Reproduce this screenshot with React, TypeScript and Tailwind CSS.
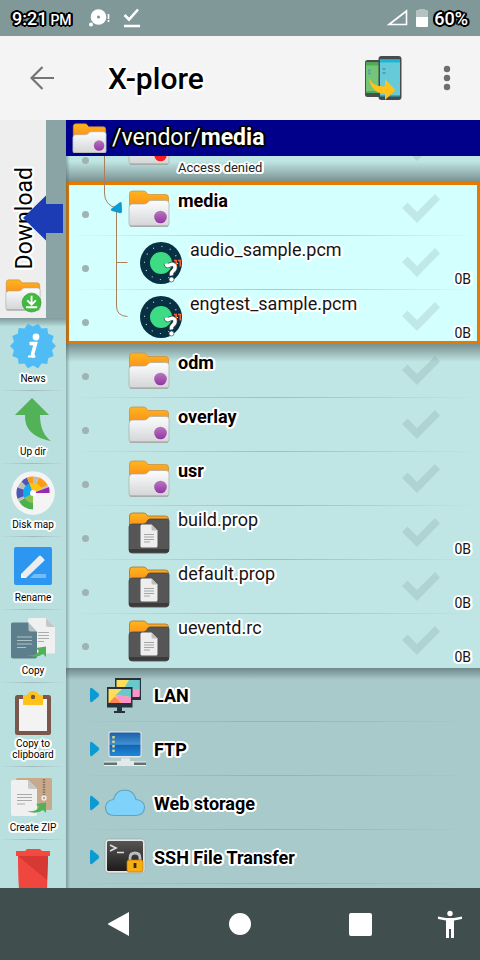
import type { ReactNode } from "react";

const halo =
  "[text-shadow:2px_0_#fff,-2px_0_#fff,0_2px_#fff,0_-2px_#fff,1px_1px_#fff,-1px_-1px_#fff,1px_-1px_#fff,-1px_1px_#fff,2px_1px_#fff,-2px_1px_#fff,2px_-1px_#fff,-2px_-1px_#fff,1px_2px_#fff,-1px_2px_#fff]";
const darkHalo =
  "[text-shadow:2px_0_#000,-2px_0_#000,0_2px_#000,0_-2px_#000,1px_1px_#000,-1px_-1px_#000,1px_-1px_#000,-1px_1px_#000,2px_1px_#000,-2px_1px_#000,2px_-1px_#000,-2px_-1px_#000]";

function Gradients() {
  return (
    <svg className="absolute size-0" aria-hidden="true">
      <defs>
        <linearGradient id="orange" x1="0" y1="0" x2="0" y2="1">
          <stop offset="0" stopColor="#ffb51f" />
          <stop offset="1" stopColor="#fb9018" />
        </linearGradient>
        <linearGradient id="paper" x1="0" y1="0" x2="0" y2="1">
          <stop offset="0" stopColor="#fdfdfd" />
          <stop offset="1" stopColor="#d2d4d6" />
        </linearGradient>
        <linearGradient id="purple" x1="0" y1="0" x2="0" y2="1">
          <stop offset="0" stopColor="#b878bd" />
          <stop offset="1" stopColor="#9335a5" />
        </linearGradient>
        <linearGradient id="screen" x1="0" y1="0" x2="0" y2="1">
          <stop offset="0" stopColor="#1c5fa9" />
          <stop offset="0.5" stopColor="#3f90d2" />
          <stop offset="0.55" stopColor="#1464b0" />
          <stop offset="1" stopColor="#1d8adb" />
        </linearGradient>
        <linearGradient id="terminal" x1="0" y1="0" x2="0" y2="1">
          <stop offset="0" stopColor="#575553" />
          <stop offset="1" stopColor="#1e1c1b" />
        </linearGradient>
      </defs>
    </svg>
  );
}

type Badge = "purple" | "red" | "download";

function Folder({ badge, className }: { badge: Badge; className: string }) {
  return (
    <svg viewBox="0 0 42 37" className={className} aria-hidden="true">
      <path d="M1.500 16V4q0-3 3-3h11q2 0 3 1.500l1.500 2h17.500q3 0 3 3v8z" fill="url(#orange)" stroke="#c98a3a" strokeWidth=".7" />
      <path
        d="M1 17.500q0-3 3-3.500h12q3 0 4-2 1-1.500 3-1.500h15q3 0 3 3v20q0 3-3 3H4q-3 0-3-3z"
        fill="url(#paper)"
        stroke="#a3acab"
        strokeWidth=".7"
      />
      <path d="M2 36h38" stroke="#a09c99" strokeWidth="1" />
      {badge === "purple" && <circle cx="32.500" cy="27" r="6.300" fill="url(#purple)" />}
      {badge === "red" && <circle cx="32.500" cy="27" r="6.300" fill="#fb1f24" />}
      {badge === "download" && (
        <g>
          <circle cx="31" cy="27.500" r="11" fill="#3fbb3f" stroke="#2c9a2e" strokeWidth=".8" />
          <path d="M31 19.500v10M26 25l5 5 5-5M24.500 33h13" fill="none" stroke="#fff" strokeWidth="2.200" />
        </g>
      )}
    </svg>
  );
}

function DarkFolder() {
  return (
    <svg viewBox="0 0 42 42" className="w-[42px] shrink-0" aria-hidden="true">
      <path d="M1.500 14V4q0-3 3-3h11q2 0 3 1.500l1 1.500h18q3 0 3 3v8z" fill="url(#orange)" stroke="#a4712c" strokeWidth=".8" />
      <path d="M1 15q0-3 3-3h11q3 0 4-2.500 1-2.500 3-2.500h17q2 0 2 2v28q0 4-3 4H4q-3 0-3-3z" fill="#565657" stroke="#47474a" strokeWidth=".8" />
      <path d="M1 37h40v1q0 2.500-3 2.500H4q-3 0-3-2.500z" fill="#3b3b3d" />
      <path d="M14 12.500h9.500l6 6V34q0 1.500-1.500 1.500H14q-1.500 0-1.500-1.500V14q0-1.500 1.500-1.500z" fill="#eee" />
      <path d="M23.500 12.500l6 6h-4.500q-1.500 0-1.500-1.500z" fill="#bdbdbd" />
      <path d="M16 22.500h10M16 25h10M16 27.500h10M16 30h6" stroke="#a5a5a5" />
    </svg>
  );
}

const questionHook = "M27 22.500q.5 3.500 3.500 1.500 4.500-2 5.500 1.500 .5 2.500-2 4.500-2 1.500-1.500 4.500";

function PcmFile() {
  return (
    <svg viewBox="0 0 44 44" className="w-[44px] shrink-0" aria-hidden="true">
      <circle cx="22" cy="22" r="21" fill="#073042" />
      <circle cx="22" cy="22" r="16.500" fill="none" stroke="#cfe0e4" strokeWidth="1.100" strokeDasharray="1 7.640" />
      <circle cx="22" cy="22" r="11" fill="#3ddc84" />
      <path d={questionHook} fill="none" stroke="#3f5057" strokeWidth="5" />
      <path d="M35 19.500h2.200v6M39 19.500h2.200v6" fill="none" stroke="#f86734" strokeWidth="1.500" />
      <path d={questionHook} fill="none" stroke="#fff" strokeWidth="3.400" />
      <circle cx="32.500" cy="38.500" r="2.500" fill="#fff" stroke="#3f5057" strokeWidth=".7" />
    </svg>
  );
}

function SelectBox({ name }: { name: string }) {
  return (
    <label className="mr-[39px] grid h-[30px] w-10 shrink-0 place-items-center">
      <input type="checkbox" aria-label={`Select ${name}`} className="col-start-1 row-start-1 size-full appearance-none" />
      <svg viewBox="0 0 40 30" className="pointer-events-none col-start-1 row-start-1 w-10" aria-hidden="true">
        <path d="M1 15l5.500-5.500 9.500 9.500L34 1l5 5.500L16 30z" fill="#64787a" opacity=".17" />
      </svg>
    </label>
  );
}

function Divider() {
  return (
    <span className="absolute inset-x-0 bottom-0 h-px bg-linear-to-r from-transparent via-[#8f97a0]/55 via-50% to-transparent" />
  );
}

interface RowProps {
  name: string;
  kind: "folder" | "denied" | "pcm" | "file";
  last?: boolean;
}

function Row({ name, kind, last }: RowProps) {
  const denied = kind === "denied";
  const indent = kind === "pcm" ? "w-[45px]" : "w-[34px]";
  return (
    <li className={`relative flex shrink-0 items-start ${denied ? "h-[62px]" : "h-[54px]"}`}>
      <span className="mb-[18px] ml-4 size-[7px] shrink-0 self-end rounded-full bg-[#9fb3b3]" />
      <span className={`${indent} ml-[5px] shrink-0`} />
      {(kind === "folder" || denied) && (
        <span className="mt-2 shrink-0">
          <Folder badge={denied ? "red" : "purple"} className="w-[42px]" />
        </span>
      )}
      {kind === "pcm" && <span className="mt-[5px] shrink-0"><PcmFile /></span>}
      {kind === "file" && <span className="mt-[6px] shrink-0"><DarkFolder /></span>}
      {denied ? (
        <span className={`mt-10 ml-2 flex-1 text-[13px] leading-4 text-[#222] ${halo}`}>{name}</span>
      ) : kind === "folder" ? (
        <span className={`mt-2 ml-2 flex-1 text-[18px] leading-[22px] font-bold text-black ${halo}`}>{name}</span>
      ) : (
        <span className={`mt-[3px] flex-1 text-[18px] leading-[22px] text-[#151515] ${halo} ${kind === "pcm" ? "ml-[7px]" : "ml-2"}`}>
          {name}
        </span>
      )}
      <span className="mt-[11px]"><SelectBox name={name} /></span>
      {(kind === "pcm" || kind === "file") && (
        <span className={`absolute right-[9px] bottom-[3px] text-[14px] leading-4 text-[#151515] ${halo}`}>0B</span>
      )}
      {!last && <Divider />}
    </li>
  );
}

const lanIcon = (
  <svg viewBox="0 0 44 44" className="w-11" aria-hidden="true">
    <path d="M12 5h26v22H12z" fill="#26323f" />
    <path d="M13.500 7h23v16h-23z" fill="#ffdf57" />
    <path d="M26 7h10.500v10H20z" fill="#68c9cc" />
    <path d="M25 16.500h11.500V24H25z" fill="#ff92c6" />
    <path d="M4 14h25.500v20.500H4zM14 34.500h5V38h3v2H11v-2h3z" fill="#26323f" />
    <path d="M5.500 16h22.500v14H5.500z" fill="#ffdf57" />
    <path d="M19 16h9v8L13 22z" fill="#68c9cc" />
    <path d="M12 22l16 2v6H18z" fill="#ff92c6" />
    <path d="M5.500 30L12 23.500l6 6.500z" fill="#ff8552" />
  </svg>
);

const ftpIcon = (
  <svg viewBox="0 0 44 44" className="w-11" aria-hidden="true">
    <path d="M1 34.500h42v4.500H1z" fill="#eee" />
    <path d="M1 35.500h42V38H1z" fill="#66706f" />
    <path d="M18 31h9v3h4v5H14v-5h4z" fill="#e5e8e8" />
    <rect x="5" y="4" width="34" height="27" rx="3" fill="#dfe5e8" stroke="#b6c0c2" strokeWidth=".7" />
    <rect x="6.500" y="5.500" width="31" height="23.500" rx="1.500" fill="url(#screen)" />
    <path d="M10.500 9v17" stroke="#d9d38c" strokeWidth="2.500" strokeDasharray="2.500 2" />
  </svg>
);

const cloudIcon = (
  <svg viewBox="0 0 44 44" className="w-11" aria-hidden="true">
    <path
      d="M11 34.500Q2.500 34 2.500 26.500q.5-7 8-8Q13 9 22 9q9 .5 11 9.500 8.500 1 8.500 8-.5 7.500-8.500 8z"
      fill="#7fd3fb"
      stroke="#63a2bd"
      strokeWidth="1.200"
    />
  </svg>
);

const sshIcon = (
  <svg viewBox="0 0 44 44" className="w-11" aria-hidden="true">
    <rect x="2" y="4" width="40" height="34" rx="3.500" fill="#e6e8e8" stroke="#9aa" strokeWidth=".7" />
    <rect x="4" y="6" width="36" height="30" rx="1.500" fill="url(#terminal)" />
    <path d="M7 10l6 3-6 3M14 17.500h7" fill="none" stroke="#ddd" strokeWidth="1.700" />
    <path d="M27 26v-3q0-5 5-5t5 5v3" fill="none" stroke="#bdbdbd" strokeWidth="2.800" />
    <rect x="24" y="25" width="16" height="12" rx="2" fill="#f8ae11" stroke="#b97908" strokeWidth=".7" />
    <path d="M32 28v5" stroke="#3a2a0a" strokeWidth="2.800" />
  </svg>
);

const services: { name: string; icon: ReactNode }[] = [
  { name: "LAN", icon: lanIcon },
  { name: "FTP", icon: ftpIcon },
  { name: "Web storage", icon: cloudIcon },
  { name: "SSH File Transfer", icon: sshIcon },
];

const toolIcon = "size-11";

// Outline of the fourteen-pointed seal behind the "i".
const sealPoints = Array.from({ length: 28 }, (_, i) => {
  const radius = i % 2 === 0 ? 23 : 19.5;
  const angle = (i * Math.PI) / 14;
  return `${(23 + radius * Math.cos(angle)).toFixed(1)},${(22 + radius * Math.sin(angle)).toFixed(1)}`;
}).join(" ");

const tools: { name: string; icon: ReactNode; iconOnly?: boolean }[] = [
  {
    name: "News",
    icon: (
      <svg viewBox="0 0 46 44" className="h-11 w-[46px]" aria-hidden="true">
        <polygon points={sealPoints} fill="#50bcf5" />
        <circle cx="26" cy="13" r="3.400" fill="#fff" />
        <path d="M19.500 19.500h6l-3 11q-.5 2.500 2.500 1" fill="none" stroke="#fff" strokeWidth="3.600" />
        <path d="M18 32.500h7" stroke="#fff" strokeWidth="2" />
      </svg>
    ),
  },
  {
    name: "Up dir",
    icon: (
      <svg viewBox="0 0 44 44" className={toolIcon} aria-hidden="true">
        <path d="M21 1L4 18h10q-1 21 26 26Q29 36 29 18h9z" fill="#53b158" />
      </svg>
    ),
  },
  {
    name: "Disk map",
    icon: (
      <svg viewBox="0 0 44 44" className={`${toolIcon} overflow-visible`} aria-hidden="true">
        <circle cx="22" cy="23" r="21.800" fill="#f4f4f4" />
        <path d="M22 23V39.500A16.500 16.500 0 0 1 8 31.500z" fill="#4caf50" />
        <path d="M22 23L8 31.500A16 16 0 0 1 6 28z" fill="#bdbdbd" />
        <path d="M22 23L6.500 28.500A16.500 16.500 0 0 1 6.500 17z" fill="#4a57b5" />
        <path d="M22 23L6.500 17.500A16.500 16.500 0 0 1 11 11z" fill="#bdbdbd" />
        <path d="M22 23L10.500 11.500A16.500 16.500 0 0 1 16 7.500z" fill="#4a57b5" />
        <path d="M22 23L16 7.500A16.500 16.500 0 0 1 22 6.500z" fill="#ff9d12" />
        <path d="M22 23V6.500A16.500 16.500 0 0 1 28 7.500z" fill="#bdbdbd" />
        <path d="M22 23L28 7.500A16.500 16.500 0 0 1 36.500 15z" fill="#ff9d12" />
        <path d="M22 23L36.500 15l1 2z" fill="#bdbdbd" />
        <path d="M22 23L38 17a16.500 16.500 0 0 1 .5 6z" fill="#9a27b0" />
        <path d="M22 23v10a10 10 0 0 1-8.500-5z" fill="#8bc34a" />
        <path d="M22 23l-8.500 5A10 10 0 0 1 18.500 13.500z" fill="#16a8ee" />
        <path d="M22 23l-3.500-9.500A10 10 0 0 1 31 18.500z" fill="#ffc413" />
        <circle cx="22" cy="23" r="3" fill="#fff" />
      </svg>
    ),
  },
  {
    name: "Rename",
    icon: (
      <svg viewBox="0 0 44 44" className={toolIcon} aria-hidden="true">
        <rect x="3" y="4" width="38" height="38" rx="2" fill="#2c96f0" />
        <path d="M23 31h12v4H19z" fill="#74bdf6" />
        <path d="M10 35v-4l18-18q1-1 2 0l3 3q1 1 0 2L15 35z" fill="#ededed" />
        <path d="M10 31l5 4h-5z" fill="#fff" />
      </svg>
    ),
  },
  {
    name: "Copy",
    icon: (
      <svg viewBox="0 0 44 44" className={toolIcon} aria-hidden="true">
        <path d="M18.500 2H35l9 9v25q0 1.500-1.500 1.500h-24q-1.500 0-1.500-1.500V3.500Q17 2 18.500 2z" fill="#f0f0f0" />
        <path d="M35 2l9 9h-7q-2 0-2-2z" fill="#c5c8c8" />
        <path d="M27 16.500h11M27 19.500h11M27 22.500h11M27 25.500h6" stroke="#a9adad" />
        <path d="M1.500 6.500h16q0 8 8.500 9v25q0 2-2 2H2q-2 0-2-2v-32q0-2 1.500-2z" fill="#5d7e8c" />
        <path d="M17.500 6.500l8.500 9h-6.500q-2 0-2-2z" fill="#b4c2c8" />
        <path d="M6 21h15M6 24.500h15M6 28h15M6 31.500h9" stroke="#b3c1c7" strokeWidth="1.200" />
        <path d="M16 39q10 1 12-4l-3-3 10-1.500V41l-3-3q-7 5-16 1z" fill="#53b158" />
      </svg>
    ),
  },
  {
    name: "Copy to clipboard",
    icon: (
      <svg viewBox="0 0 44 44" className={`${toolIcon} overflow-visible`} aria-hidden="true">
        <rect x="4" y="6" width="36" height="40" rx="2.500" fill="#7b564a" />
        <path d="M8 10h28v32H8z" fill="#f3f3f3" />
        <path d="M12 6h4q2-4 6-4t6 4h4v10H12z" fill="#ffc21a" />
        <circle cx="22" cy="8" r="2.200" fill="#755246" />
      </svg>
    ),
  },
  {
    name: "Create ZIP",
    icon: (
      <svg viewBox="0 0 44 44" className={toolIcon} aria-hidden="true">
        <rect x="5" y="5" width="36" height="32" rx="1.500" fill="#c9a98b" />
        <path d="M33 6v17" stroke="#857866" strokeWidth="2.400" strokeDasharray="1.500 1" />
        <circle cx="33" cy="25" r="2" fill="none" stroke="#eee" strokeWidth="1.400" />
        <path d="M1.500 7H17l9 9v25q0 2-2 2H1.500Q0 43 0 41V8.500Q0 7 1.500 7z" fill="#f0f0f0" />
        <path d="M17 7l9 9h-7q-2 0-2-2z" fill="#c5c8c8" />
        <path d="M6 21.500h15M6 24.500h15M6 27.500h15M6 31h8" stroke="#aaa" strokeWidth="1.200" />
        <path d="M16 38q10 1 12-4l-3-3 10-1.500V40l-3-3q-7 5-16 1z" fill="#53b158" />
      </svg>
    ),
  },
  {
    name: "Delete",
    iconOnly: true,
    icon: (
      <svg viewBox="0 0 44 44" className={toolIcon} aria-hidden="true">
        <path d="M5 5h9l2-2h13l2 2h8v5H5z" fill="#f4493f" />
        <path d="M7 10h30l-1 34H8z" fill="#e93e38" />
        <path d="M7 10h2l27 23-1 11H8z" fill="#ef4640" />
        <path d="M7 10h30v4L36 34z" fill="#d63833" />
      </svg>
    ),
  },
];

function Toolbar() {
  return (
    <aside className="flex w-[66px] shrink-0 flex-col overflow-hidden bg-[#b9e0df]">
      <button className="relative flex h-[198px] shrink-0 bg-[#8aa4a5] text-left">
        <span className="flex h-full w-[46px] flex-col items-center justify-end gap-[10px] bg-[#eee] pb-[7px]">
          <span className={`ml-1 rotate-180 text-[23px] leading-[26px] text-black [writing-mode:vertical-rl] ${halo}`}>
            Download
          </span>
          <Folder badge="download" className="w-[36px] overflow-visible" />
        </span>
        <svg viewBox="0 0 40 46" className="absolute top-[75px] left-[23px] w-10" aria-hidden="true">
          <path d="M0 23L23 .5V9h17v29H23v7.500z" fill="#1c3cb5" />
        </svg>
      </button>
      {tools.map((tool, index) => (
        <button
          key={tool.name}
          aria-label={tool.iconOnly ? tool.name : undefined}
          className={`relative flex shrink-0 flex-col items-center px-2 pt-[6px] pb-[7px] ${
            index === 0 ? "bg-linear-to-b from-[#7f9a9a] to-transparent to-12%" : ""
          }`}
        >
          {tool.icon}
          {!tool.iconOnly && <span className={`mt-[5px] text-[10px] leading-[11px] text-black ${halo}`}>{tool.name}</span>}
          <Divider />
        </button>
      ))}
    </aside>
  );
}

function TreeLines() {
  return (
    <svg viewBox="0 0 40 170" className="absolute top-9 left-[30px] w-10" aria-hidden="true">
      <path d="M8.500 0v37q0 12 12 15M20.500 52v98q0 10 11 10.500M20.500 106.500h11" fill="none" stroke="#a98058" />
      <path d="M15.500 52.500l8-6q2-1.500 2.200 1l.3 8q0 2-2 1.800l-8-2.300q-2-1-.5-2.500z" fill="#0a9bd3" />
    </svg>
  );
}

export default function App() {
  return (
    <div className="flex h-screen flex-col overflow-hidden bg-[#f4f4f4] font-[Roboto,sans-serif]">
      <Gradients />
      <div className="flex h-9 shrink-0 items-center bg-[#809998] px-3 text-[18px] font-medium text-white">
        <span className={`flex items-baseline gap-[3px] ${darkHalo}`}>
          <span>9:21</span>
          <span className="text-[14px]">PM</span>
        </span>
        <svg viewBox="0 0 22 20" className="ml-4 w-[22px]" aria-hidden="true">
          <circle cx="10.500" cy="9" r="7.800" fill="#fff" />
          <circle cx="10.500" cy="9" r="1.600" fill="#809998" />
          <circle cx="3" cy="16.500" r="2" fill="#fff" />
          <path d="M20.500 6v5M20.500 12v2" stroke="#fff" strokeWidth="1.600" />
        </svg>
        <svg viewBox="0 0 18 20" className="ml-[13px] w-[18px]" aria-hidden="true">
          <path d="M1.500 7l4.500 4.500L15 1.500M1 18h16" fill="none" stroke="#fff" strokeWidth="2.600" />
        </svg>
        <svg viewBox="0 0 22 18" className="ml-auto w-[22px]" aria-hidden="true">
          <path d="M3 15.500L20.500 2v13.500z" fill="none" stroke="#fff" strokeWidth="1.600" />
        </svg>
        <svg viewBox="0 0 12 20" className="ml-2 w-3" aria-hidden="true">
          <path d="M0 3q0-1 1-1h2V1h6v1h2q1 0 1 1v6H0z" fill="#b4c3c2" />
          <path d="M0 9h12v9q0 1-1 1H1q-1 0-1-1z" fill="#fff" />
        </svg>
        <span className={`ml-[6px] ${darkHalo}`}>60%</span>
      </div>

      <header className="flex h-[84px] shrink-0 items-center pr-[22px] pl-[30px]">
        <button aria-label="Back">
          <svg viewBox="0 0 24 24" className="w-6" aria-hidden="true">
            <path d="M24 12H2M12.500 1L1.500 12l11 11" fill="none" stroke="#747474" strokeWidth="2.200" />
          </svg>
        </button>
        <h1 className={`ml-[54px] text-[30px] font-medium text-black ${halo}`}>X-plore</h1>
        <button aria-label="Switch pane" className="ml-auto">
          <svg viewBox="0 0 38 46" className="w-[38px]" aria-hidden="true">
            <rect x="1" y="5" width="20" height="37" rx="2.500" fill="#4a4f4e" />
            <path d="M2 7.500h17v30H2z" fill="#74c577" />
            <path d="M2 7.500h17v3H2zM2 36h17v2H2z" fill="#4bb050" />
            <rect x="14.500" y="1" width="23" height="44" rx="3" fill="#474b4e" />
            <path d="M16 4.500h20v36.500H16z" fill="#66cad8" />
            <path d="M16 4.500h20v3H16zM16 40h20v1.500H16z" fill="#1fb5d0" />
            <path d="M4 15.500h2.500M4 18.500h2.500M18.500 14h3M18.500 18h3" stroke="#55a0a5" strokeWidth="2" />
            <path d="M5 23q5 10 16 8v-7l10.500 11L21 45v-6Q7 38 5 23z" fill="#ffc21a" />
          </svg>
        </button>
        <button aria-label="More options" className="ml-[34px]">
          <svg viewBox="0 0 22 26" className="w-[22px]" aria-hidden="true">
            <g fill="#6e6e6e">
              <circle cx="11" cy="4" r="3.200" />
              <circle cx="11" cy="13" r="3.200" />
              <circle cx="11" cy="22" r="3.200" />
            </g>
          </svg>
        </button>
      </header>

      <div className="flex min-h-0 flex-1">
        <Toolbar />
        <main className="relative flex min-w-0 flex-1 flex-col overflow-hidden bg-[#bfe6e4] text-black">
          <div className="flex h-9 shrink-0 items-center bg-[#00008b] pl-[6px] text-[23px] text-white">
            <Folder badge="purple" className="w-[35px] shrink-0" />
            <span className={`ml-[5px] ${darkHalo}`}>
              /vendor/<b>media</b>
            </span>
          </div>
          <ul className="flex h-[26px] shrink-0 flex-col justify-end overflow-hidden bg-linear-to-b from-transparent from-20% to-[#788f8f]">
            <Row name="Access denied" kind="denied" last />
          </ul>
          <ul className="shrink-0 bg-[#d4ffff] shadow-[inset_0_0_0_3px_#e37b00]">
            <Row name="media" kind="folder" />
            <Row name="audio_sample.pcm" kind="pcm" />
            <Row name="engtest_sample.pcm" kind="pcm" last />
          </ul>
          <ul className="shrink-0 bg-linear-to-b from-[#788f8f] to-transparent to-[18px]">
            <Row name="odm" kind="folder" />
            <Row name="overlay" kind="folder" />
            <Row name="usr" kind="folder" />
            <Row name="build.prop" kind="file" />
            <Row name="default.prop" kind="file" />
            <Row name="ueventd.rc" kind="file" last />
          </ul>
          <ul className="flex-1 bg-[#a9cacb] bg-linear-to-b from-[#6f8889] to-[#a9cacb] to-[12px]">
            {services.map((service) => (
              <li key={service.name} className="relative">
                <button className="flex h-[54px] w-full items-center pl-6 text-left">
                  <svg viewBox="0 0 10 16" className="w-[10px]" aria-hidden="true">
                    <path d="M0 3q0-3 2-2l6.500 5.500q1.500 1.500 0 3L2 15q-2 1-2-2z" fill="#0a9bd3" />
                  </svg>
                  <span className="ml-[3px]">{service.icon}</span>
                  <span className={`ml-[7px] text-[18px] font-bold ${halo}`}>{service.name}</span>
                </button>
                <Divider />
              </li>
            ))}
          </ul>
          <div className="pointer-events-none absolute top-9 bottom-0 left-0 w-1 bg-linear-to-r from-[#40585a]/40 to-transparent" />
          <TreeLines />
        </main>
      </div>

      <nav className="grid h-[72px] shrink-0 grid-cols-[1fr_120px_120px_120px_60px] items-center justify-items-center bg-[#404e4d]">
        <span />
        <button aria-label="Back">
          <svg viewBox="0 0 24 26" className="w-6" aria-hidden="true">
            <path d="M21 1v24L1 14q-2-1 0-2z" fill="#fff" />
          </svg>
        </button>
        <button aria-label="Home" className="size-[22px] rounded-full bg-white" />
        <button aria-label="Recent apps" className="size-[23px] rounded-xs bg-white" />
        <button aria-label="Accessibility">
          <svg viewBox="0 0 24 28" className="w-6" aria-hidden="true">
            <circle cx="12" cy="3.500" r="2.700" fill="#fff" />
            <path d="M0 6.500l8 1.500h8l8-1.500v2.500L16 10.500V28h-3v-9h-2v9H8V10.500L0 9z" fill="#fff" />
          </svg>
        </button>
      </nav>
    </div>
  );
}
